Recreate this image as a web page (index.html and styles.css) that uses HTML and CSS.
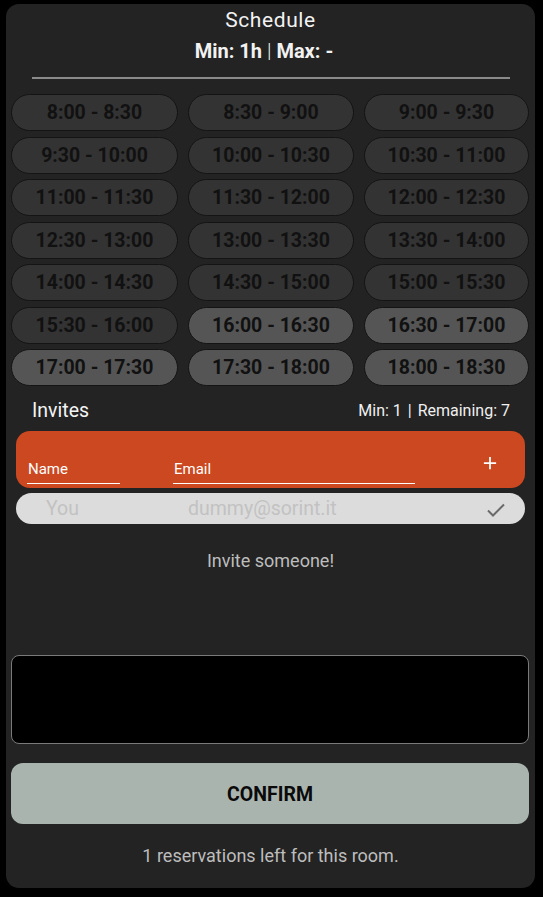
FILE: index.html
```html
<!DOCTYPE html>
<html>
<head>
<meta charset="utf-8">
<link rel="stylesheet" href="styles.css">
</head>
<body>
<div class="card">
  <div class="title">Schedule</div>
  <div class="limits">Min: 1h <span class="sep">|</span> Max: -</div>
  <div class="divider"></div>
  <div class="slots">
    <div class="slot">8:00 - 8:30</div>
    <div class="slot">8:30 - 9:00</div>
    <div class="slot">9:00 - 9:30</div>
    <div class="slot">9:30 - 10:00</div>
    <div class="slot">10:00 - 10:30</div>
    <div class="slot">10:30 - 11:00</div>
    <div class="slot">11:00 - 11:30</div>
    <div class="slot">11:30 - 12:00</div>
    <div class="slot">12:00 - 12:30</div>
    <div class="slot">12:30 - 13:00</div>
    <div class="slot">13:00 - 13:30</div>
    <div class="slot">13:30 - 14:00</div>
    <div class="slot">14:00 - 14:30</div>
    <div class="slot">14:30 - 15:00</div>
    <div class="slot">15:00 - 15:30</div>
    <div class="slot">15:30 - 16:00</div>
    <div class="slot free">16:00 - 16:30</div>
    <div class="slot free">16:30 - 17:00</div>
    <div class="slot free">17:00 - 17:30</div>
    <div class="slot free">17:30 - 18:00</div>
    <div class="slot free">18:00 - 18:30</div>
  </div>
  <div class="invites-head">
    <span class="invites-title">Invites</span>
    <span class="invites-meta">Min: 1 <span class="bar">|</span> Remaining: 7</span>
  </div>
  <div class="add-box">
    <div class="field name-field">Name</div>
    <div class="field email-field">Email</div>
    <svg class="plus" width="16" height="16" viewBox="0 0 16 16"><path d="M8 1V15M1 8H15" stroke="#fff" stroke-width="2"/></svg>
  </div>
  <div class="you-row">
    <span class="you-name">You</span>
    <span class="you-email">dummy@sorint.it</span>
    <svg class="check" width="20" height="16" viewBox="0 0 20 16"><path d="M2 8.5L7 13.5L18 2.5" fill="none" stroke="#6a6a6a" stroke-width="2"/></svg>
  </div>
  <div class="invite-hint">Invite someone!</div>
  <div class="notes"></div>
  <div class="confirm">CONFIRM</div>
  <div class="footer">1 reservations left for this room.</div>
</div>
</body>
</html>
```
FILE: styles.css
```css
html, body {
  margin: 0;
  padding: 0;
  background: #000;
}
body {
  font-family: Roboto, "Noto Sans", sans-serif;
  padding: 4px 8px 9px 6px;
}
.card {
  width: 529px;
  height: 884px;
  background: #232323;
  border-radius: 13px;
  display: flex;
  flex-direction: column;
  box-sizing: border-box;
}
.title {
  text-align: center;
  color: #f2f2f2;
  font-size: 21px;
  line-height: 22px;
  margin-top: 5px;
  letter-spacing: 0.6px;
}
.limits {
  text-align: center;
  color: #f2f2f2;
  font-size: 20px;
  font-weight: 700;
  line-height: 22px;
  margin-top: 9px;
  padding-right: 13px;
}
.limits .sep {
  font-weight: 300;
}
.divider {
  height: 2px;
  background: #8a8a8a;
  margin: 15px 25px 0 26px;
}
.slots {
  display: grid;
  grid-template-columns: 167px 166px 165px;
  column-gap: 10px;
  grid-auto-rows: 37px;
  row-gap: 5.5px;
  margin: 15px 6px 0 5px;
}
.slot {
  background: #333333;
  border: 1px solid #141414;
  border-radius: 19px;
  display: flex;
  align-items: center;
  justify-content: center;
  color: #111111;
  font-weight: 700;
  font-size: 19.5px;
}
.slot.free {
  background: #555555;
}
.invites-head {
  display: flex;
  justify-content: space-between;
  align-items: center;
  margin: 12px 25px 0 26px;
  height: 24px;
}
.invites-title {
  color: #f4f4f4;
  font-size: 19.5px;
}
.invites-meta {
  color: #f0f0f0;
  font-size: 16px;
}
.invites-meta .bar {
  margin: 0 2px;
}
.add-box {
  margin: 9px 10px 0 10px;
  height: 57px;
  background: #cb4820;
  border-radius: 14px;
  position: relative;
  display: flex;
  align-items: flex-end;
  padding: 0 0 4px 11px;
  box-sizing: border-box;
}
.field {
  color: #fff;
  font-size: 15px;
  line-height: 20px;
  border-bottom: 1px solid #fff;
  padding: 0 0 4px 1px;
}
.name-field {
  width: 92px;
}
.email-field {
  width: 241px;
  margin-left: 53px;
}
.plus {
  position: absolute;
  right: 28px;
  top: 25px;
  width: 14px;
  height: 14px;
}
.you-row {
  margin: 5px 10px 0 10px;
  height: 31px;
  background: #dcdcdc;
  border-radius: 16px;
  display: flex;
  align-items: center;
  position: relative;
  font-size: 19.5px;
  color: #c2c2c2;
}
.you-name {
  margin-left: 30px;
}
.you-email {
  margin-left: 109px;
}
.check {
  position: absolute;
  right: 19px;
  top: 9px;
  width: 20px;
  height: 16px;
}
.invite-hint {
  text-align: center;
  color: #bdbdbd;
  font-size: 18px;
  margin-top: 26px;
  line-height: 22px;
}
.notes {
  margin: 83px 6px 0 5px;
  height: 89px;
  background: #000;
  border: 1px solid #7a7a7a;
  border-radius: 8px;
  box-sizing: border-box;
}
.confirm {
  margin: 19px 6px 0 5px;
  height: 61px;
  padding-top: 2px;
  box-sizing: border-box;
  background: #aab4ae;
  border-radius: 12px;
  display: flex;
  align-items: center;
  justify-content: center;
  font-weight: 700;
  font-size: 19.5px;
  color: #0a0a0a;
}
.footer {
  text-align: center;
  color: #bdbdbd;
  font-size: 18px;
  margin-top: 21px;
  line-height: 22px;
}
```
